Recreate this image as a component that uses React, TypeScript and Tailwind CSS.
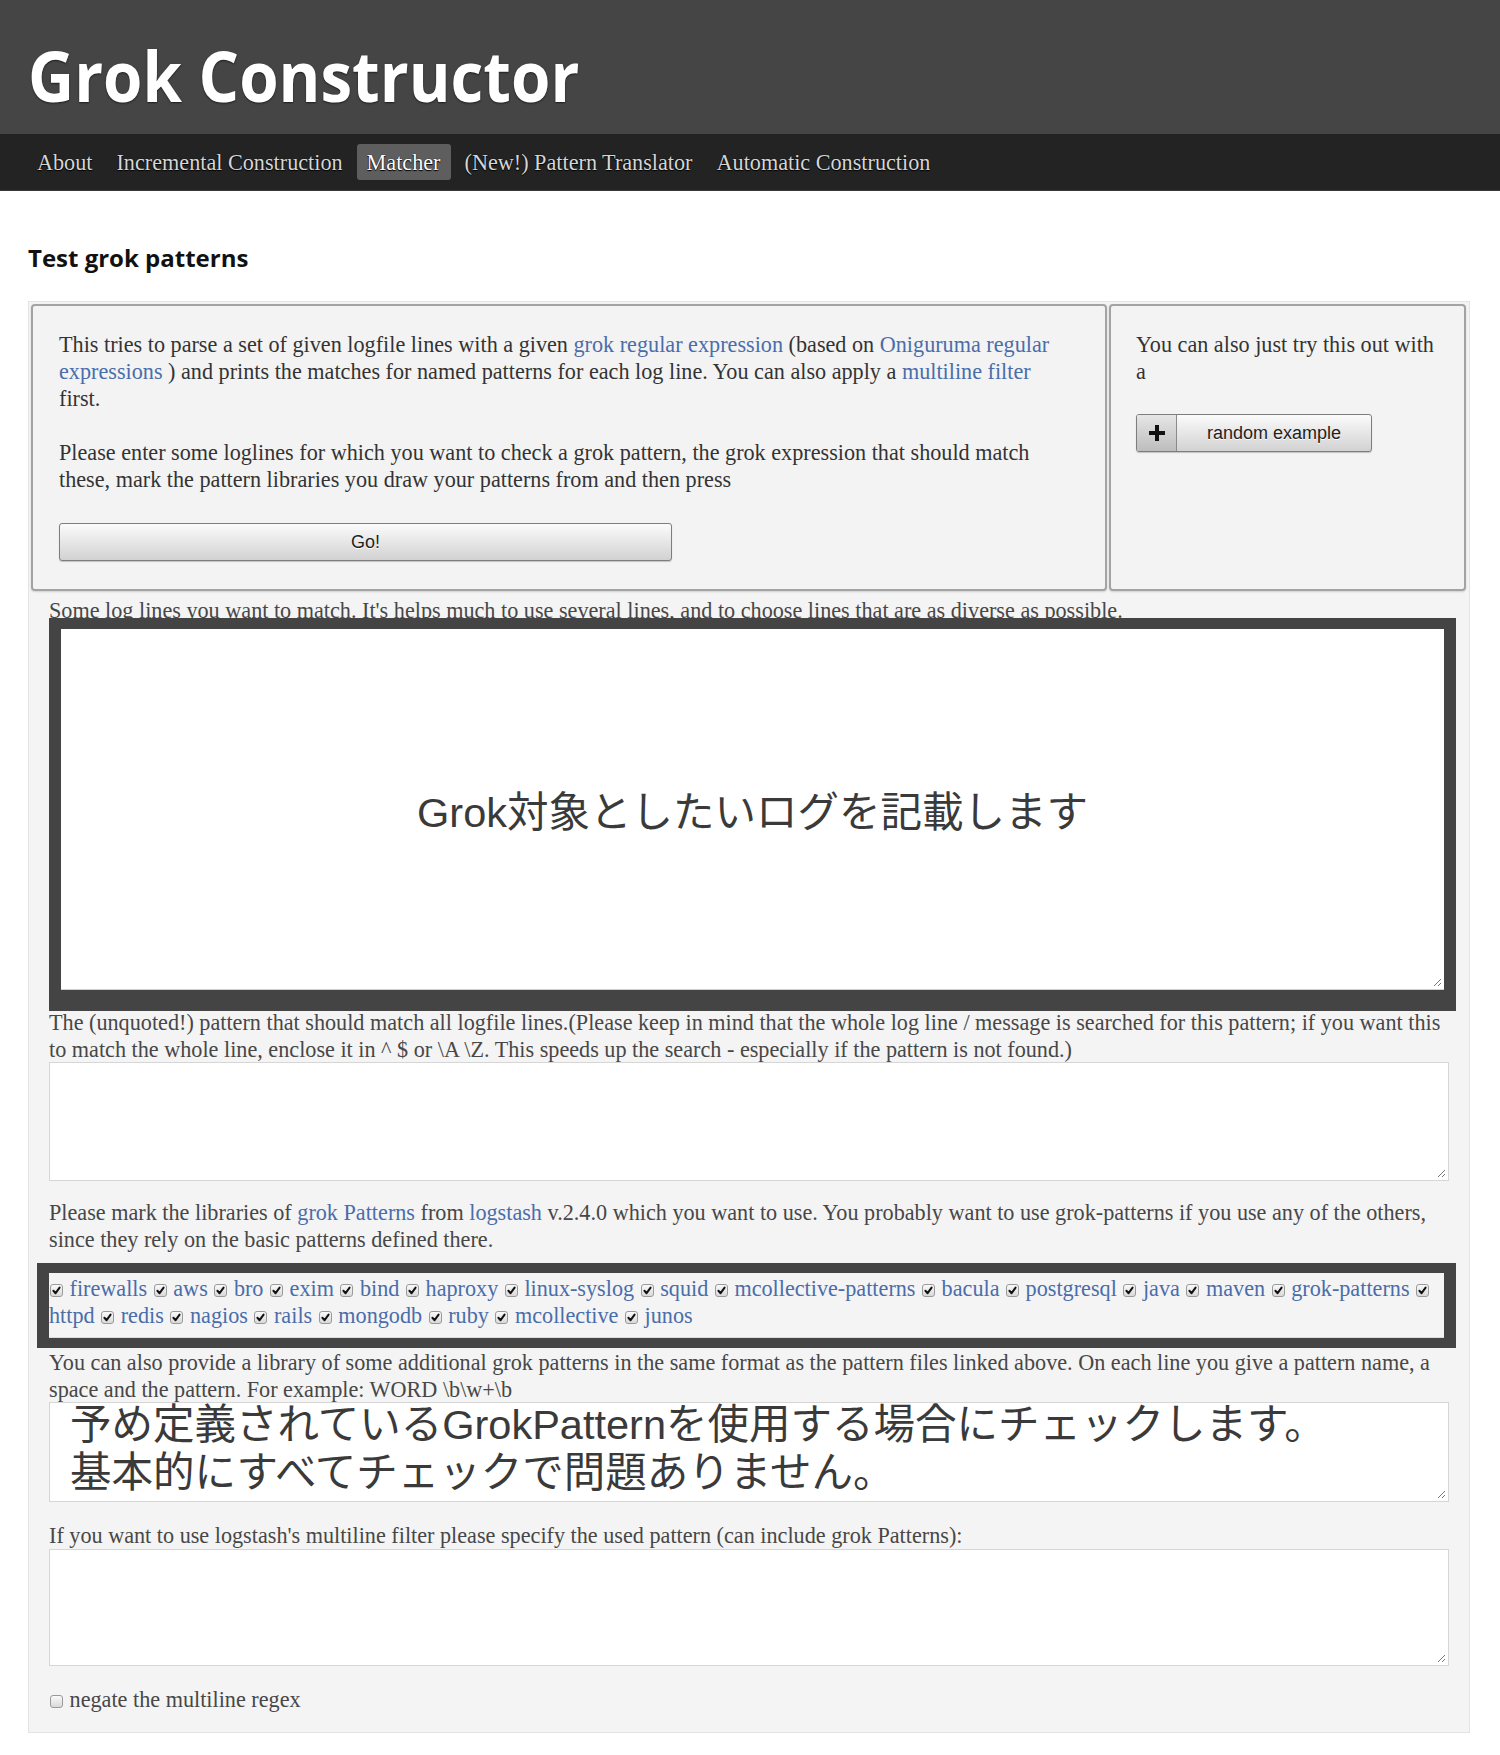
import React from "react";

function Cb({ checked = true }: { checked?: boolean }) {
  return (
    <span className="inline-block w-[13px] h-[13px] mx-[1px] align-[-1px] rounded-[3px] border border-[#9a9a9a] bg-gradient-to-b from-[#fafafa] to-[#d9d9d9] relative">
      {checked && (
        <svg viewBox="0 0 13 13" className="absolute left-[-1px] top-[-1px] w-[13px] h-[13px]">
          <path d="M3.4 6.8 L5.6 9.2 L9.6 3.6" fill="none" stroke="#111" strokeWidth="2" strokeLinecap="round" strokeLinejoin="round" />
        </svg>
      )}
    </span>
  );
}

function Resize() {
  return (
    <svg viewBox="0 0 10 10" className="absolute right-[2px] bottom-[2px] w-[10px] h-[10px]">
      <path d="M9 2 L2 9 M9 6 L6 9" stroke="#777" strokeWidth="1" fill="none" />
    </svg>
  );
}

const L = ({ children }: { children: React.ReactNode }) => (
  <a className="text-[#4a6daa] no-underline cursor-pointer">{children}</a>
);

const row1 = [
  "firewalls",
  "aws",
  "bro",
  "exim",
  "bind",
  "haproxy",
  "linux-syslog",
  "squid",
  "mcollective-patterns",
  "bacula",
  "postgresql",
  "java",
  "maven",
  "grok-patterns",
];
const row2 = ["redis", "nagios", "rails", "mongodb", "ruby", "mcollective", "junos"];

export default function App() {
  return (
    <div className="min-h-screen bg-white font-['Liberation_Serif',serif] text-[22.2px] leading-[27px] text-[#333]">
      <header className="bg-[#454545] h-[134px] pl-[28px] pt-[40px]">
        <h1 className="inline-block origin-left scale-x-[0.91] font-['Open_Sans',sans-serif] font-bold text-[70px] leading-[70px] text-white [text-shadow:0_1px_2px_rgba(0,0,0,0.6)] whitespace-nowrap">
          Grok Constructor
        </h1>
      </header>
      <nav className="bg-[#232323] h-[57px] flex items-center pl-[27px] gap-[4px] border-b border-[#3a3a3a]">
        {["About", "Incremental Construction", "Matcher", "(New!) Pattern Translator", "Automatic Construction"].map((t) => (
          <span
            key={t}
            className={
              t === "Matcher"
                ? "h-[36px] px-[10px] flex items-center rounded-[3px] bg-[#5e5e5e] text-white [text-shadow:0_1px_1px_#000,0_0_1px_#000] whitespace-nowrap"
                : "h-[36px] px-[10px] flex items-center text-[#d6d6d6] [text-shadow:0_1px_1px_#000,0_0_1px_#000] whitespace-nowrap"
            }
          >
            {t}
          </span>
        ))}
      </nav>
      <main className="pl-[28px] pr-[30px]">
        <h2 className="mt-[51px] font-['Open_Sans',sans-serif] font-bold text-[24px] leading-[32px] text-[#111]">
          Test grok patterns
        </h2>
        <div className="mt-[27px] bg-[#f4f4f4] border border-[#e4e4e4] pb-[19px]">
          <div className="flex gap-[2px] pl-[2px] pr-[3px] pt-[2px]">
            <div className="w-[1076px] h-[287px] border-2 border-[#a3a3a3] rounded-[4px] bg-[#f3f3f3] pl-[26px] pt-[25px] shadow-[0_1px_2px_rgba(0,0,0,0.15)]">
              <p className="mb-[27px]">
                <span className="block whitespace-nowrap">
                  This tries to parse a set of given logfile lines with a given <L>grok regular expression</L> (based on <L>Oniguruma regular</L>
                </span>
                <span className="block whitespace-nowrap">
                  <L>expressions</L> ) and prints the matches for named patterns for each log line. You can also apply a <L>multiline filter</L>
                </span>
                <span className="block whitespace-nowrap">first.</span>
              </p>
              <p>
                <span className="block whitespace-nowrap">
                  Please enter some loglines for which you want to check a grok pattern, the grok expression that should match
                </span>
                <span className="block whitespace-nowrap">
                  these, mark the pattern libraries you draw your patterns from and then press
                </span>
              </p>
              <button className="mt-[30px] w-[613px] h-[38px] rounded-[3px] border border-[#7d7d7d] bg-gradient-to-b from-[#fbfbfb] to-[#d2d2d2] font-['Liberation_Sans',sans-serif] text-[18px] text-[#222] [text-shadow:0_1px_0_#fff] shadow-[0_1px_1px_rgba(0,0,0,0.2)] flex items-center justify-center">
                Go!
              </button>
            </div>
            <div className="flex-1 h-[287px] border-2 border-[#a3a3a3] rounded-[4px] bg-[#f3f3f3] pl-[25px] pt-[25px] shadow-[0_1px_2px_rgba(0,0,0,0.15)]">
              <p>
                <span className="block whitespace-nowrap">You can also just try this out with</span>
                <span className="block">a</span>
              </p>
              <button className="mt-[29px] w-[236px] h-[38px] rounded-[3px] border border-[#7d7d7d] bg-gradient-to-b from-[#fbfbfb] to-[#d2d2d2] flex items-stretch overflow-hidden shadow-[0_1px_1px_rgba(0,0,0,0.2)]">
                <span className="w-[40px] border-r border-[#8a8a8a] bg-gradient-to-b from-[#e6e6e6] to-[#bdbdbd] flex items-center justify-center">
                  <svg viewBox="0 0 20 20" className="w-[20px] h-[20px]">
                    <rect x="8" y="2" width="4" height="16" fill="#111" />
                    <rect x="2" y="8" width="16" height="4" fill="#111" />
                  </svg>
                </span>
                <span className="flex-1 flex items-center justify-center font-['Liberation_Sans',sans-serif] text-[18px] text-[#222] [text-shadow:0_1px_0_#fff]">
                  random example
                </span>
              </button>
            </div>
          </div>

          <div className="px-[20px] text-[#474747]">
            <div className="mt-[6px] whitespace-nowrap">
              Some log lines you want to match. It's helps much to use several lines, and to choose lines that are as diverse as possible.
            </div>
            <div className="relative -mt-[6px] mr-[-7px] border-[#444] border-x-[12px] border-t-[11px] border-b-[21px]">
              <div className="relative h-[361px] bg-white border-b border-[#cfcfcf] flex items-center justify-center">
                <span className="font-['Liberation_Sans','Noto_Sans_CJK_JP',sans-serif] text-[41.5px] leading-[48px] text-[#3a3a3a] mt-[8px]">
                  Grok対象としたいログを記載します
                </span>
                <Resize />
              </div>
            </div>

            <div className="mt-[-2px]">
              <span className="block whitespace-nowrap">
                The (unquoted!) pattern that should match all logfile lines.(Please keep in mind that the whole log line / message is searched for this pattern; if you want this
              </span>
              <span className="block whitespace-nowrap">
                to match the whole line, enclose it in ^ $ or \A \Z. This speeds up the search - especially if the pattern is not found.)
              </span>
            </div>
            <div className="relative h-[119px] -mt-[1px] bg-white border border-[#d6d6d6]">
              <Resize />
            </div>

            <div className="mt-[18px]">
              <span className="block whitespace-nowrap">
                Please mark the libraries of <L>grok Patterns</L> from <L>logstash</L> v.2.4.0 which you want to use. You probably want to use grok-patterns if you use any of the others,
              </span>
              <span className="block whitespace-nowrap">since they rely on the basic patterns defined there.</span>
            </div>
            <div className="relative mt-[10px] ml-[-12px] mr-[-7px] border-[#444] border-x-[12px] border-y-[10px]">
              <div className="bg-[#f4f4f4] pt-[2px] pb-[8px] border-b border-[#dcdcdc]">
                <div className="whitespace-nowrap">
                  {row1.map((n) => (
                    <React.Fragment key={n}>
                      <Cb /> <L>{n}</L>{" "}
                    </React.Fragment>
                  ))}
                  <Cb />
                </div>
                <div className="whitespace-nowrap">
                  <L>httpd</L>
                  {row2.map((n) => (
                    <React.Fragment key={n}>
                      {" "}
                      <Cb /> <L>{n}</L>
                    </React.Fragment>
                  ))}
                </div>
              </div>
            </div>

            <div className="mt-[1px]">
              <span className="block whitespace-nowrap">
                You can also provide a library of some additional grok patterns in the same format as the pattern files linked above. On each line you give a pattern name, a
              </span>
              <span className="block whitespace-nowrap">space and the pattern. For example: WORD \b\w+\b</span>
            </div>
            <div className="relative h-[100px] -mt-[1px] bg-white border border-[#d6d6d6] pl-[20px]">
              <div className="-mt-[2px] font-['Liberation_Sans','Noto_Sans_CJK_JP',sans-serif] text-[41.5px] leading-[48px] text-[#3a3a3a] whitespace-nowrap">
                <div>予め定義されているGrokPatternを使用する場合にチェックします。</div>
                <div>基本的にすべてチェックで問題ありません。</div>
              </div>
              <Resize />
            </div>

            <div className="mt-[20px] whitespace-nowrap">
              If you want to use logstash's multiline filter please specify the used pattern (can include grok Patterns):
            </div>
            <div className="relative h-[117px] bg-white border border-[#d6d6d6]">
              <Resize />
            </div>

            <div className="mt-[20px] whitespace-nowrap">
              <Cb checked={false} /> negate the multiline regex
            </div>
          </div>
        </div>
      </main>
    </div>
  );
}
